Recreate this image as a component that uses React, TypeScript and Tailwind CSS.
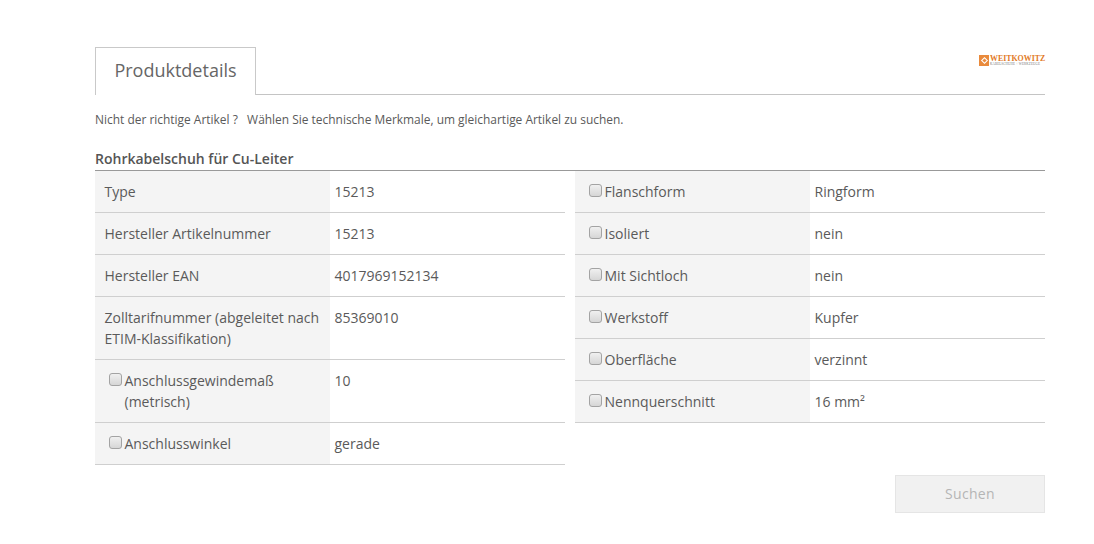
const left: [string, string, boolean][] = [
  ["Type", "15213", false],
  ["Hersteller Artikelnummer", "15213", false],
  ["Hersteller EAN", "4017969152134", false],
  ["Zolltarifnummer (abgeleitet nach ETIM-Klassifikation)", "85369010", false],
  ["Anschlussgewindemaß (metrisch)", "10", true],
  ["Anschlusswinkel", "gerade", true],
];
const right: [string, string, boolean][] = [
  ["Flanschform", "Ringform", true],
  ["Isoliert", "nein", true],
  ["Mit Sichtloch", "nein", true],
  ["Werkstoff", "Kupfer", true],
  ["Oberfläche", "verzinnt", true],
  ["Nennquerschnitt", "16 mm²", true],
];

function Table({ rows }: { rows: [string, string, boolean][] }) {
  return (
    <div className="w-[470px]">
      {rows.map(([label, value, check]) => (
        <div key={label} className="flex border-b border-[#cfcfcf]">
          <div className="w-[235px] shrink-0 bg-[#f4f4f4] py-[10px] pl-[9.5px] pr-[5px]">
            {check ? (
              <div className="relative pl-[20px]">
                <span className="absolute left-[4.5px] top-[3px] h-[12.5px] w-[12.5px] rounded-[3px] border border-[#a3a3a3] bg-gradient-to-b from-[#f0f0f0] to-[#d6d6d6]" />
                {label}
              </div>
            ) : (
              label
            )}
          </div>
          <div className="flex-1 py-[10px] pl-[4.5px]">{value}</div>
        </div>
      ))}
    </div>
  );
}

export default function App() {
  return (
    <div className="h-[544px] w-[1094px] overflow-hidden bg-white pl-[95px] pt-[47px] font-['Open_Sans',sans-serif] text-[14px] leading-[21px] text-[#5a5a5a]">
      <div className="w-[950px]">
        <div className="flex h-[48px] items-start justify-between border-b border-[#c4c4c4]">
          <div className="h-[48px] w-[161px] border border-b-0 border-[#c9c9c9] bg-white text-center text-[18px] leading-[44px] text-[#666]">
            Produktdetails
          </div>
          <div className="mt-[8px] flex h-[11px] w-[66px] items-center gap-[1px]">
            <div className="flex h-[11px] w-[10px] shrink-0 items-center justify-center bg-[#e98a3c]">
              <div className="h-[5px] w-[5px] rotate-45 border border-white" />
            </div>
            <div className="flex flex-col whitespace-nowrap font-['Liberation_Serif',serif] leading-none">
              <span className="text-[7.9px] font-bold leading-[8px] text-[#e27a26]">WEITKOWITZ</span>
              <span className="text-[3.2px] leading-[3px] tracking-[0.15px] text-[#777]">KABELSCHUHE + WERKZEUGE</span>
            </div>
          </div>
        </div>
        <p className="mt-[16px] text-[11.95px] leading-[18px]">Nicht der richtige Artikel ? &nbsp; Wählen Sie technische Merkmale, um gleichartige Artikel zu suchen.</p>
        <h3 className="mt-[20px] border-b border-[#999] pb-[2px] text-[14px] font-semibold leading-[19px] text-[#555]">
          Rohrkabelschuh für Cu-Leiter
        </h3>
        <div className="flex justify-between">
          <Table rows={left} />
          <Table rows={right} />
        </div>
        <div className="mt-[10px] flex justify-end">
          <button disabled className="h-[38px] w-[150px] border border-[#e5e5e5] bg-[#f1f1f1] pb-[2px] text-[14px] tracking-[0.3px] text-[#b5b5b5]">
            Suchen
          </button>
        </div>
      </div>
    </div>
  );
}
